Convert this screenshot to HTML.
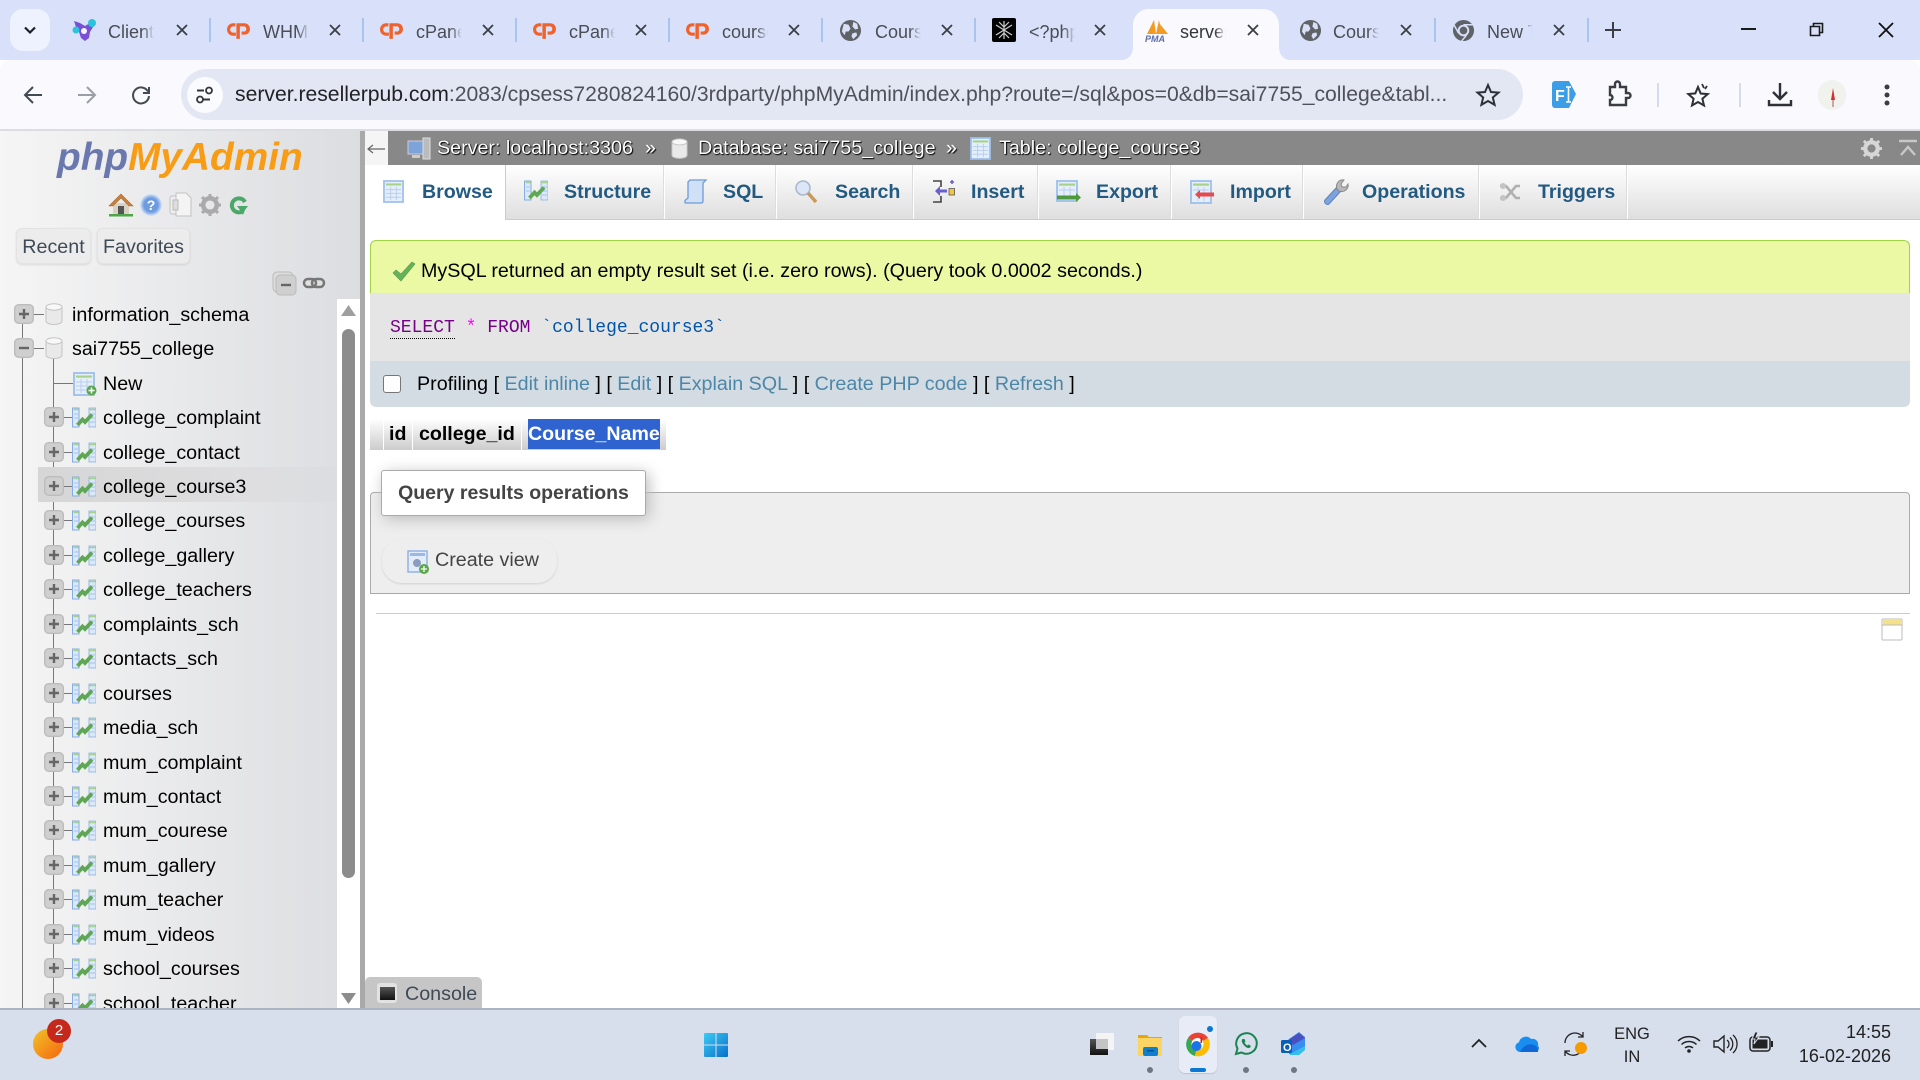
<!DOCTYPE html>
<html><head><meta charset="utf-8"><title>phpMyAdmin</title>
<style>
html,body{margin:0;padding:0;width:1920px;height:1080px;overflow:hidden;background:#fff}
body{font-family:"Liberation Sans",sans-serif;position:relative;font-size:19.7px;color:#000}
.abs{position:absolute;white-space:nowrap}
svg{position:absolute;overflow:visible}
.tabt{position:absolute;top:21px;font-size:18px;line-height:22px;color:#4a4d55;width:46px;overflow:hidden;white-space:nowrap;-webkit-mask-image:linear-gradient(to right,#000 75%,transparent 100%);mask-image:linear-gradient(to right,#000 75%,transparent 100%)}
.sep{position:absolute;top:18px;width:2px;height:24px;background:#a9c4ef}
.nt{position:absolute;top:179px;font-weight:bold;font-size:19.6px;color:#235a81;line-height:26px;white-space:nowrap}
.r{position:absolute;left:0;width:337px;height:34px}
.r span{position:absolute;left:103px;top:1px;line-height:34px;white-space:nowrap}
.r svg.p{left:44px;top:7px;width:20px;height:20px}
.r svg.h{left:64px;top:17px;width:10px;height:1px}
.r svg.i{left:72px;top:5px;width:24px;height:24px}
.lnk{color:#4d87a8}
.tbh{position:absolute;top:419px;height:31px;background:linear-gradient(#fff,#ccc)}
.vl{position:absolute;top:165px;width:1px;height:55px;background:#fff;box-shadow:-1px 0 0 #ddd}
</style></head><body>
<svg width="0" height="0" style="position:absolute">
<defs>
<symbol id="x" viewBox="0 0 14 14"><path d="M2 2L12 12M12 2L2 12" stroke="#3b3e45" stroke-width="1.800" fill="none"/></symbol>
<symbol id="cp" viewBox="0 0 24 20"><path d="M9 3H7C3.500 3 1 5.600 1 9s2.500 6 6 6h2.500V12H7c-1.600 0-3-1.300-3-3s1.400-3 3-3h2z" fill="#f1622a"/><path d="M10 18V3h7.500C21 3 23 5.500 23 8.500S21 14 17.500 14H15v-3h2.300c1.200 0 2.200-1.100 2.200-2.500S18.500 6 17.300 6H13.300v12z" fill="#f1622a"/></symbol>
<symbol id="gl" viewBox="0 0 24 24"><circle cx="12" cy="12" r="11" fill="#5f6368"/><path d="M5 5l5 1 2 4-2 3-3 0-1 4-3-4zM15 3l4 2 1 5-3 1-3-3zM14 15l4-1 1 3-4 4-2-3z" fill="#d8e1f8"/></symbol>
<symbol id="plus" viewBox="0 0 20 20"><rect x=".7" y=".7" width="18.600" height="18.600" rx="4" fill="#cfcfcf" stroke="#bcbcbc" stroke-width="1.400"/><path d="M5 10h10M10 5v10" stroke="#666" stroke-width="2.400"/></symbol>
<symbol id="minus" viewBox="0 0 20 20"><rect x=".7" y=".7" width="18.600" height="18.600" rx="4" fill="#cfcfcf" stroke="#bcbcbc" stroke-width="1.400"/><path d="M5 10h10" stroke="#666" stroke-width="2.400"/></symbol>
<symbol id="st" viewBox="0 0 24 24"><path d="M.5 3h6.500v19H.5z" fill="#dbe8f8" stroke="#86ade2"/><path d="M17 3h7v19h-7z" fill="#dbe8f8" stroke="#86ade2" stroke-width=".8"/><path d="M1.500 4.500h5" stroke="#a5d38a" stroke-width="1.500"/><path d="M17.500 4.500h6" stroke="#a5d38a" stroke-width="1.500"/><path d="M2 9h4M2 13h4M18 9h5M18 13h5M18 17h5" stroke="#a5c2ea"/><path d="M5.500 20L10.500 14.500l2.500 2.500 7-7.500" fill="none" stroke="#5fa655" stroke-width="3.800"/></symbol>
<symbol id="db" viewBox="0 0 18 22"><path d="M1 4v14c0 2 3.500 3.500 8 3.500s8-1.500 8-3.500V4z" fill="#e9e9e9" stroke="#c4c4c4"/><ellipse cx="9" cy="4" rx="8" ry="3.200" fill="#f8f8f8" stroke="#c4c4c4"/></symbol>
<symbol id="tb" viewBox="0 0 22 24"><rect x="1" y="1" width="20" height="22" fill="#e6eefa" stroke="#9cc0ec" stroke-width="1.800"/><rect x="3" y="3.500" width="16" height="2.200" fill="#a5d38a"/><path d="M3 10h16M3 14h16M3 18h16M8 7v14M14 7v14" stroke="#b7cfee"/></symbol>
</defs></svg>

<!-- TAB STRIP -->
<div class="abs" style="left:0;top:0;width:1920px;height:60px;background:#d8e1f9"></div>
<div class="abs" style="left:10px;top:9px;width:40px;height:42px;background:#edf2fe;border-radius:13px"></div>
<svg style="left:23px;top:26px" width="14" height="9"><path d="M2 1.500l5 5 5-5" stroke="#1d2024" stroke-width="2.200" fill="none"/></svg>

<svg style="left:72px;top:18px" width="25" height="24" viewBox="0 0 25 24"><path d="M2 3l6 2 5 3 5-3 5-2-2 6-3 5-1 6-4 3-4-3-2-6-3-5z" fill="#7a4fd6"/><circle cx="20" cy="5" r="4" fill="#2cc4dc"/><circle cx="4" cy="12" r="3.500" fill="#2cc4dc"/><circle cx="12" cy="13" r="3" fill="#f5f3fb"/></svg>
<div class="tabt" style="left:108px">Client</div>
<svg style="left:175px;top:23px" width="14" height="14"><use href="#x"/></svg>
<div class="sep" style="left:209px"></div>
<svg style="left:226px;top:20px" width="25" height="21"><use href="#cp"/></svg>
<div class="tabt" style="left:263px">WHM</div>
<svg style="left:328px;top:23px" width="14" height="14"><use href="#x"/></svg>
<div class="sep" style="left:362px"></div>
<svg style="left:379px;top:20px" width="25" height="21"><use href="#cp"/></svg>
<div class="tabt" style="left:416px">cPanel</div>
<svg style="left:481px;top:23px" width="14" height="14"><use href="#x"/></svg>
<div class="sep" style="left:515px"></div>
<svg style="left:532px;top:20px" width="25" height="21"><use href="#cp"/></svg>
<div class="tabt" style="left:569px">cPanel</div>
<svg style="left:634px;top:23px" width="14" height="14"><use href="#x"/></svg>
<div class="sep" style="left:668px"></div>
<svg style="left:685px;top:20px" width="25" height="21"><use href="#cp"/></svg>
<div class="tabt" style="left:722px">courses</div>
<svg style="left:787px;top:23px" width="14" height="14"><use href="#x"/></svg>
<div class="sep" style="left:821px"></div>
<svg style="left:839px;top:19px" width="23" height="23"><use href="#gl"/></svg>
<div class="tabt" style="left:875px">Course</div>
<svg style="left:940px;top:23px" width="14" height="14"><use href="#x"/></svg>
<div class="sep" style="left:974px"></div>
<div class="abs" style="left:992px;top:18px;width:24px;height:24px;background:#000;border-radius:2px"></div>
<svg style="left:992px;top:18px" width="24" height="24"><path d="M12 3v18M4 7l16 10M20 7L4 17M7 4l5 5 5-5M7 20l5-5 5 5" stroke="#ccc" stroke-width="1.200" fill="none"/></svg>
<div class="tabt" style="left:1029px">&lt;?php</div>
<svg style="left:1093px;top:23px" width="14" height="14"><use href="#x"/></svg>

<!-- Active tab -->
<svg style="left:1120px;top:9px" width="172" height="52" viewBox="0 0 172 52"><path d="M0 51c8 0 12-4 13-12V16C13 7 20 0 29 0h114c9 0 16 7 16 16v23c1 8 5 12 13 12z" fill="#f9f9fe"/></svg>
<svg style="left:1145px;top:18px" width="25" height="25" viewBox="0 0 25 25"><path d="M2 16L9 2l2 14zM11 16L14 2l3 14zM17 16L15 6l8 10z" fill="#f29b22"/><text x="0" y="24" font-family="Liberation Sans" font-size="9" font-weight="bold" font-style="italic" fill="#5a6ea8">PMA</text></svg>
<div class="tabt" style="left:1180px;color:#33363c">server</div>
<svg style="left:1246px;top:23px" width="14" height="14"><use href="#x"/></svg>

<svg style="left:1299px;top:19px" width="23" height="23"><use href="#gl"/></svg>
<div class="tabt" style="left:1333px">Course</div>
<svg style="left:1399px;top:23px" width="14" height="14"><use href="#x"/></svg>
<div class="sep" style="left:1434px"></div>
<svg style="left:1452px;top:19px" width="23" height="23" viewBox="0 0 24 24"><circle cx="12" cy="12" r="11" fill="#5f6368"/><circle cx="12" cy="12" r="6" fill="#d8e1f9"/><circle cx="12" cy="12" r="4" fill="#5f6368"/><path d="M12 6h10M7 15L2 6M15 17l-5 6" stroke="#d8e1f9" stroke-width="1.500"/></svg>
<div class="tabt" style="left:1487px">New Tab</div>
<svg style="left:1552px;top:23px" width="14" height="14"><use href="#x"/></svg>
<div class="sep" style="left:1587px"></div>
<svg style="left:1605px;top:22px" width="16" height="16"><path d="M8 0v16M0 8h16" stroke="#3b3e45" stroke-width="2"/></svg>
<svg style="left:1741px;top:28px" width="15" height="3"><rect width="15" height="2" fill="#1a1a1a"/></svg>
<svg style="left:1809px;top:22px" width="15" height="15"><path d="M1.500 4.500h9v9h-9zM4.500 4.500v-3h9v9h-3" fill="none" stroke="#1a1a1a" stroke-width="1.600"/></svg>
<svg style="left:1878px;top:22px" width="16" height="16"><path d="M1 1l14 14M15 1L1 15" stroke="#111" stroke-width="1.800"/></svg>

<!-- TOOLBAR -->
<div class="abs" style="left:0;top:60px;width:1920px;height:69px;background:#f9f9fe;border-radius:10px 10px 0 0"></div>
<div class="abs" style="left:0;top:129px;width:1920px;height:2px;background:#dcdde2"></div>
<svg style="left:23px;top:85px" width="20" height="20"><path d="M19 10H2M10 2l-8 8 8 8" fill="none" stroke="#444a52" stroke-width="2"/></svg>
<svg style="left:77px;top:85px" width="20" height="20"><path d="M1 10h17M10 2l8 8-8 8" fill="none" stroke="#9a9ea6" stroke-width="2"/></svg>
<svg style="left:131px;top:85px" width="20" height="20"><path d="M17 6.500A8 8 0 1 0 18 11M18 2v6h-6" fill="none" stroke="#444a52" stroke-width="2"/></svg>
<div class="abs" style="left:181px;top:69px;width:1342px;height:51px;background:#e3e7f3;border-radius:26px"></div>
<div class="abs" style="left:187px;top:77px;width:36px;height:36px;background:#fafbff;border-radius:18px"></div>
<svg style="left:196px;top:86px" width="18" height="18"><path d="M1 4.500h7M14 13.500H7" stroke="#33363c" stroke-width="2"/><circle cx="13" cy="4.500" r="3" fill="none" stroke="#33363c" stroke-width="1.800"/><circle cx="4" cy="13.500" r="3" fill="none" stroke="#33363c" stroke-width="1.800"/></svg>
<div class="abs" style="left:235px;top:82px;font-size:21.15px;line-height:25px;color:#4e5159;width:1220px;overflow:hidden"><span style="color:#1f2125">server.resellerpub.com</span>:2083/cpsess7280824160/3rdparty/phpMyAdmin/index.php?route=/sql&amp;pos=0&amp;db=sai7755_college&amp;tabl...</div>
<svg style="left:1476px;top:83px" width="24" height="24" viewBox="0 0 24 24"><path d="M12 2l3 7 7.500.6-5.700 4.900 1.800 7.300L12 18l-6.600 3.800 1.800-7.300L1.500 9.600 9 9z" fill="none" stroke="#2e3137" stroke-width="2"/></svg>
<svg style="left:1551px;top:80px" width="26" height="29" viewBox="0 0 26 29"><path d="M4 1h14l7 13-7 14H4a3 3 0 0 1-3-3V4a3 3 0 0 1 3-3z" fill="#3c9ee6"/><text x="4" y="21" font-family="Liberation Sans" font-size="16" font-weight="bold" fill="#fff">F</text><path d="M15 7h5M15 22h5M17.500 7v15" stroke="#fff" stroke-width="1.600"/></svg>
<svg style="left:1607px;top:81px" width="24" height="26" viewBox="0 0 24 26"><path d="M3 6h5V3a2.500 2.500 0 0 1 5 0v3h6v6h2a2.500 2.500 0 0 1 0 5h-2v7H3v-5a2.500 2.500 0 0 0 0-5z" fill="none" stroke="#3a3d44" stroke-width="2.400"/></svg>
<div class="abs" style="left:1657px;top:83px;width:2px;height:24px;background:#d4dcee"></div>
<svg style="left:1686px;top:83px" width="26" height="24" viewBox="0 0 26 24"><path d="M12 4l2.700 6.500 7 .6-5.300 4.600 1.600 6.800L12 19l-6 3.500 1.600-6.800L2.300 11l7-.6z" fill="none" stroke="#2e3137" stroke-width="2"/><path d="M16 1l2 4M21 3l-2 3" stroke="#2e3137" stroke-width="1.800"/></svg>
<div class="abs" style="left:1739px;top:83px;width:2px;height:24px;background:#d4dcee"></div>
<svg style="left:1768px;top:82px" width="24" height="25" viewBox="0 0 24 25"><path d="M12 1v15M5 10l7 7 7-7" fill="none" stroke="#2e3137" stroke-width="2.400"/><path d="M1 18v5h22v-5" fill="none" stroke="#2e3137" stroke-width="2.400"/></svg>
<div class="abs" style="left:1818px;top:80px;width:28px;height:30px;background:radial-gradient(circle,#f2f3e8,#eef2f2);border-radius:14px"></div>
<svg style="left:1830px;top:88px" width="6" height="20"><path d="M3 0L5 12H1z" fill="#cf2f3a"/><path d="M3 12v7" stroke="#a55" stroke-width="1"/></svg>
<svg style="left:1884px;top:84px" width="6" height="22"><circle cx="3" cy="3" r="2.500" fill="#3a3d44"/><circle cx="3" cy="11" r="2.500" fill="#3a3d44"/><circle cx="3" cy="19" r="2.500" fill="#3a3d44"/></svg>

<!-- SIDEBAR -->
<div class="abs" style="left:0;top:131px;width:360px;height:877px;background:linear-gradient(to right,#f5f5f5,#dcdde0)"></div>
<div class="abs" style="left:360px;top:131px;width:5px;height:877px;background:#a9a9a9"></div>
<div class="abs" style="left:57px;top:136px;font-size:38.800px;line-height:44px;font-weight:bold;font-style:italic;color:#6a78ae">php<span style="color:#f79c14">MyAdmin</span></div>

<svg style="left:108px;top:192px" width="26" height="25" viewBox="0 0 26 25"><path d="M5 11h16v11H5z" fill="#d9d2c2"/><path d="M13 2L1 14h4L13 6l8 8h4z" fill="#c8803e" stroke="#a86a30" stroke-width=".6"/><rect x="10" y="14" width="6" height="8" fill="#555"/><path d="M1 22h24v2.500H1z" fill="#4ea648"/></svg>
<div class="abs" style="left:140px;top:194px;width:22px;height:22px;border-radius:11px;background:radial-gradient(circle,#6d9be0 45%,#d6e4f7 70%,#7da4dc 100%);text-align:center;color:#fff;font-size:14px;font-weight:bold;line-height:22px">?</div>
<svg style="left:169px;top:192px" width="23" height="25" viewBox="0 0 23 25"><rect x="1" y="4" width="12" height="18" rx="2" fill="#eee" stroke="#c2c2c2"/><path d="M7 1h10l5 5v18H7z" fill="#f4f4f4" stroke="#c2c2c2"/><rect x="4" y="8" width="5" height="10" fill="#ddd" stroke="#bbb"/></svg>
<svg style="left:198px;top:193px" width="24" height="24" viewBox="0 0 24 24"><circle cx="12" cy="12" r="6.800" fill="none" stroke="#aaa" stroke-width="4.500"/><path d="M12 1v5M12 18v5M1 12h5M18 12h5M4 4l4 4M16 16l4 4M20 4l-4 4M8 16l-4 4" stroke="#aaa" stroke-width="3"/></svg>
<svg style="left:229px;top:194px" width="20" height="24" viewBox="0 0 20 24"><path d="M16 8A7 7 0 1 0 14 17" fill="none" stroke="#4aa868" stroke-width="4"/><path d="M8 12h11l-3 4 -2 5-3-5z" fill="#4aa868"/></svg>

<div class="abs" style="left:16px;top:228px;width:73px;height:34px;background:#ececec;border:1px solid #e3e3e3;border-radius:6px;text-align:center;line-height:36px;color:#3f4a57;box-shadow:0 1px 2px rgba(0,0,0,.1)">Recent</div>
<div class="abs" style="left:97px;top:228px;width:91px;height:34px;background:#ececec;border:1px solid #e3e3e3;border-radius:6px;text-align:center;line-height:36px;color:#3f4a57;box-shadow:0 1px 2px rgba(0,0,0,.1)">Favorites</div>

<svg style="left:272px;top:271px" width="24" height="24" viewBox="0 0 24 24"><rect x="1" y="1" width="20" height="20" rx="4" fill="#ddd" stroke="#bbb"/><rect x="4" y="4" width="20" height="20" rx="4" fill="#cfcfcf" stroke="#bbb"/><path d="M9 14h10" stroke="#666" stroke-width="2.400"/></svg>
<svg style="left:303px;top:276px" width="22" height="14" viewBox="0 0 22 14"><rect x="1" y="3" width="12" height="8" rx="4" fill="none" stroke="#777" stroke-width="2.500"/><rect x="9" y="3" width="12" height="8" rx="4" fill="none" stroke="#777" stroke-width="2.500"/></svg>

<!-- scrollbar -->
<div class="abs" style="left:337px;top:299px;width:23px;height:709px;background:#fff"></div>
<svg style="left:341px;top:305px" width="15" height="12"><path d="M7.500 0L15 11H0z" fill="#9f9f9f"/></svg>
<div class="abs" style="left:342px;top:329px;width:13px;height:549px;background:#8c8c8c;border-radius:7px"></div>
<svg style="left:341px;top:993px" width="15" height="12"><path d="M7.500 11L15 0H0z" fill="#8c8c8c"/></svg>

<!-- tree -->
<div class="abs" style="left:22px;top:324px;width:1px;height:684px;background:#777"></div>
<div class="abs" style="left:53px;top:348px;width:1px;height:660px;background:#777"></div>
<div class="abs" style="left:38px;top:467px;width:299px;height:35px;background:linear-gradient(to right,#d6d6d6,#dedee0 70%,#dcdde0)"></div>

<svg style="left:14px;top:304px" width="20" height="20"><use href="#plus"/></svg>
<div class="abs" style="left:34px;top:314px;width:10px;height:1px;background:#777"></div>
<svg style="left:45px;top:303px" width="18" height="22"><use href="#db"/></svg>
<div class="abs" style="left:72px;top:298px;line-height:34px">information_schema</div>
<svg style="left:14px;top:338px" width="20" height="20"><use href="#minus"/></svg>
<div class="abs" style="left:34px;top:348px;width:10px;height:1px;background:#777"></div>
<svg style="left:45px;top:337px" width="18" height="22"><use href="#db"/></svg>
<div class="abs" style="left:72px;top:332px;line-height:34px">sai7755_college</div>
<div class="abs" style="left:53px;top:383px;width:20px;height:1px;background:#777"></div>
<svg style="left:73px;top:372px" width="22" height="24"><use href="#tb"/></svg>
<svg style="left:86px;top:385px" width="11" height="11"><circle cx="5.500" cy="5.500" r="5" fill="#5aa84a"/><path d="M2.500 5.500h6M5.500 2.500v6" stroke="#fff" stroke-width="1.500"/></svg>
<div class="abs" style="left:103px;top:367px;line-height:34px">New</div>

<div class="r" style="top:400px"><svg class="p"><use href="#plus"/></svg><svg class="h"><rect width="10" height="1" fill="#777"/></svg><svg class="i"><use href="#st"/></svg><span>college_complaint</span></div>
<div class="r" style="top:434.500px"><svg class="p"><use href="#plus"/></svg><svg class="h"><rect width="10" height="1" fill="#777"/></svg><svg class="i"><use href="#st"/></svg><span>college_contact</span></div>
<div class="r" style="top:469px"><svg class="p"><use href="#plus"/></svg><svg class="h"><rect width="10" height="1" fill="#777"/></svg><svg class="i"><use href="#st"/></svg><span>college_course3</span></div>
<div class="r" style="top:503.400px"><svg class="p"><use href="#plus"/></svg><svg class="h"><rect width="10" height="1" fill="#777"/></svg><svg class="i"><use href="#st"/></svg><span>college_courses</span></div>
<div class="r" style="top:537.800px"><svg class="p"><use href="#plus"/></svg><svg class="h"><rect width="10" height="1" fill="#777"/></svg><svg class="i"><use href="#st"/></svg><span>college_gallery</span></div>
<div class="r" style="top:572.200px"><svg class="p"><use href="#plus"/></svg><svg class="h"><rect width="10" height="1" fill="#777"/></svg><svg class="i"><use href="#st"/></svg><span>college_teachers</span></div>
<div class="r" style="top:606.700px"><svg class="p"><use href="#plus"/></svg><svg class="h"><rect width="10" height="1" fill="#777"/></svg><svg class="i"><use href="#st"/></svg><span>complaints_sch</span></div>
<div class="r" style="top:641.100px"><svg class="p"><use href="#plus"/></svg><svg class="h"><rect width="10" height="1" fill="#777"/></svg><svg class="i"><use href="#st"/></svg><span>contacts_sch</span></div>
<div class="r" style="top:675.600px"><svg class="p"><use href="#plus"/></svg><svg class="h"><rect width="10" height="1" fill="#777"/></svg><svg class="i"><use href="#st"/></svg><span>courses</span></div>
<div class="r" style="top:710px"><svg class="p"><use href="#plus"/></svg><svg class="h"><rect width="10" height="1" fill="#777"/></svg><svg class="i"><use href="#st"/></svg><span>media_sch</span></div>
<div class="r" style="top:744.500px"><svg class="p"><use href="#plus"/></svg><svg class="h"><rect width="10" height="1" fill="#777"/></svg><svg class="i"><use href="#st"/></svg><span>mum_complaint</span></div>
<div class="r" style="top:778.900px"><svg class="p"><use href="#plus"/></svg><svg class="h"><rect width="10" height="1" fill="#777"/></svg><svg class="i"><use href="#st"/></svg><span>mum_contact</span></div>
<div class="r" style="top:813.400px"><svg class="p"><use href="#plus"/></svg><svg class="h"><rect width="10" height="1" fill="#777"/></svg><svg class="i"><use href="#st"/></svg><span>mum_courese</span></div>
<div class="r" style="top:847.800px"><svg class="p"><use href="#plus"/></svg><svg class="h"><rect width="10" height="1" fill="#777"/></svg><svg class="i"><use href="#st"/></svg><span>mum_gallery</span></div>
<div class="r" style="top:882.300px"><svg class="p"><use href="#plus"/></svg><svg class="h"><rect width="10" height="1" fill="#777"/></svg><svg class="i"><use href="#st"/></svg><span>mum_teacher</span></div>
<div class="r" style="top:916.700px"><svg class="p"><use href="#plus"/></svg><svg class="h"><rect width="10" height="1" fill="#777"/></svg><svg class="i"><use href="#st"/></svg><span>mum_videos</span></div>
<div class="r" style="top:951.200px"><svg class="p"><use href="#plus"/></svg><svg class="h"><rect width="10" height="1" fill="#777"/></svg><svg class="i"><use href="#st"/></svg><span>school_courses</span></div>
<div class="r" style="top:985.600px"><svg class="p"><use href="#plus"/></svg><svg class="h"><rect width="10" height="1" fill="#777"/></svg><svg class="i"><use href="#st"/></svg><span>school_teacher</span></div>

<!-- MAIN HEADER -->
<div class="abs" style="left:365px;top:131px;width:1555px;height:34px;background:#888"></div>
<div class="abs" style="left:365px;top:131px;width:23px;height:34px;background:#f5f5f5"></div>
<svg style="left:367px;top:144px" width="18" height="10"><path d="M18 5H1M6 1L1 5l5 4" fill="none" stroke="#666" stroke-width="1.200"/></svg>
<svg style="left:407px;top:136px" width="24" height="25" viewBox="0 0 24 25"><rect x="1" y="5" width="15" height="13" fill="#7da4d8" stroke="#ccd"/><rect x="16" y="2" width="7" height="21" fill="#bbb" stroke="#ddd"/><rect x="5" y="19" width="8" height="3" fill="#ccc"/></svg>
<div class="abs" style="left:437px;top:135px;line-height:26px;color:#fff;text-shadow:1px 1px 1px #000,0 0 1px #000">Server: localhost:3306</div>
<div class="abs" style="left:645px;top:135px;line-height:26px;color:#fff;text-shadow:1px 1px 1px #000">»</div>
<svg style="left:671px;top:138px" width="17" height="21"><use href="#db"/></svg>
<div class="abs" style="left:698px;top:135px;line-height:26px;color:#fff;text-shadow:1px 1px 1px #000,0 0 1px #000">Database: sai7755_college</div>
<div class="abs" style="left:946px;top:135px;line-height:26px;color:#fff;text-shadow:1px 1px 1px #000">»</div>
<svg style="left:970px;top:137px" width="21" height="23"><use href="#tb"/></svg>
<div class="abs" style="left:999px;top:135px;line-height:26px;color:#fff;text-shadow:1px 1px 1px #000,0 0 1px #000">Table: college_course3</div>
<svg style="left:1860px;top:137px" width="23" height="23" viewBox="0 0 24 24"><circle cx="12" cy="12" r="6.500" fill="none" stroke="#d6d6d6" stroke-width="4.500"/><path d="M12 1v5M12 18v5M1 12h5M18 12h5M4 4l4 4M16 16l4 4M20 4l-4 4M8 16l-4 4" stroke="#d6d6d6" stroke-width="3"/></svg>
<svg style="left:1899px;top:140px" width="18" height="17"><path d="M0 1h18M2 15l7-8 7 8" fill="none" stroke="#c8c8c8" stroke-width="2.400"/></svg>

<!-- NAV TABS -->
<div class="abs" style="left:365px;top:165px;width:1555px;height:55px;background:linear-gradient(#fff,#dedede)"></div>
<div class="abs" style="left:365px;top:165px;width:141px;height:55px;background:#fff;border-right:1px solid #ccc;box-sizing:border-box"></div>
<div class="vl" style="left:664px"></div>
<div class="vl" style="left:776px"></div>
<div class="vl" style="left:913px"></div>
<div class="vl" style="left:1038px"></div>
<div class="vl" style="left:1171px"></div>
<div class="vl" style="left:1303px"></div>
<div class="vl" style="left:1479px"></div>
<div class="vl" style="left:1627px"></div>
<svg style="left:383px;top:180px" width="21" height="23"><use href="#tb"/></svg>
<div class="nt" style="left:422px">Browse</div>
<svg style="left:524px;top:178px" width="24" height="24"><use href="#st"/></svg>
<div class="nt" style="left:564px">Structure</div>
<svg style="left:684px;top:179px" width="23" height="25" viewBox="0 0 23 25"><path d="M6 1h16l-3 3v18c0 1.500-1 2-2 2H2c-1.500 0-1.500-2-.5-3L4 19V3z" fill="#cfe0f7" stroke="#6f9bd8" stroke-width="1.300"/></svg>
<div class="nt" style="left:723px">SQL</div>
<svg style="left:795px;top:180px" width="22" height="24" viewBox="0 0 22 24"><circle cx="8" cy="8" r="7" fill="#dbe7f7" stroke="#a8b8cc" stroke-width="1.500"/><path d="M13 13l8 9" stroke="#c99a5c" stroke-width="3.500"/></svg>
<div class="nt" style="left:835px">Search</div>
<svg style="left:933px;top:179px" width="22" height="26" viewBox="0 0 22 26"><path d="M0 2h8v5M0 23h8v-5M8 7v1M8 17v1" fill="none" stroke="#444" stroke-width="1.600"/><path d="M14 10.500H7V7L2 12l5 5v-3.500h7z" fill="#6a5fd0"/><rect x="16" y="9.500" width="5.500" height="6.500" fill="#f3c63d" stroke="#555" stroke-width=".8"/><path d="M19 1v4M17 3h4" stroke="#6a5fd0" stroke-width="1.500"/></svg>
<div class="nt" style="left:971px">Insert</div>
<svg style="left:1056px;top:180px" width="25" height="24" viewBox="0 0 25 24"><rect x="1" y="1" width="20" height="20" fill="#e6eefa" stroke="#9cc0ec" stroke-width="1.800"/><rect x="3" y="3.500" width="16" height="2.200" fill="#a5d38a"/><path d="M3 10h16M8 7v9M14 7v9" stroke="#b7cfee"/><path d="M1 15.500h19V13l5 4.500-5 4.500v-2.500H1z" fill="#4f9a3c"/></svg>
<div class="nt" style="left:1096px">Export</div>
<svg style="left:1190px;top:180px" width="24" height="24" viewBox="0 0 24 24"><rect x="1" y="1" width="20" height="22" fill="#e6eefa" stroke="#9cc0ec" stroke-width="1.800"/><rect x="3" y="3.500" width="16" height="2.200" fill="#a5d38a"/><path d="M3 10h16M8 7v14M14 7v14" stroke="#b7cfee"/><path d="M24 12.500H10V10l-5 4.500 5 4.500v-2.500h14z" fill="#e74a4a"/></svg>
<div class="nt" style="left:1230px">Import</div>
<svg style="left:1323px;top:178px" width="26" height="28" viewBox="0 0 26 28"><path d="M2 22L14 9l4 4L6 26c-2 2-6-2-4-4z" fill="#7da3dd" stroke="#5e83bc"/><path d="M14 11c-2-5 2-10 7-9l-3 4 1 3 4 0 2-3c1 5-4 9-9 7z" fill="#b8b8b8" stroke="#888"/></svg>
<div class="nt" style="left:1362px">Operations</div>
<svg style="left:1499px;top:181px" width="24" height="22" viewBox="0 0 24 22"><path d="M1 5h6l10 12h4M1 17h6L17 5h4" fill="none" stroke="#b0b0b0" stroke-width="2.600"/><circle cx="4" cy="5" r="3" fill="#c4c4c4"/><circle cx="4" cy="17" r="3" fill="#c4c4c4"/></svg>
<div class="nt" style="left:1538px">Triggers</div>
<div class="abs" style="left:506px;top:219px;width:1414px;height:1px;background:#ccc"></div>

<!-- SUCCESS -->
<div class="abs" style="left:370px;top:240px;width:1540px;height:53px;background:#ebf8a4;border:1px solid #a2d246;border-bottom:none;border-radius:6px 6px 0 0;box-sizing:border-box"></div>
<svg style="left:393px;top:262px" width="22" height="19" viewBox="0 0 22 19"><path d="M0 11l3-3 5 4L19 0l3 2L8 19z" fill="#66b258" stroke="#5a9c50" stroke-width=".6"/></svg>
<div class="abs" style="left:421px;top:257px;line-height:28px">MySQL returned an empty result set (i.e. zero rows). (Query took 0.0002 seconds.)</div>

<!-- SQL -->
<div class="abs" style="left:370px;top:293px;width:1540px;height:68px;background:#e5e5e5"></div>
<div class="abs" style="left:390px;top:315px;font-family:'Liberation Mono',monospace;font-size:18px;line-height:26px"><span style="color:#770088;border-bottom:1px dotted #000">SELECT</span> <span style="color:#ff00ff">*</span> <span style="color:#770088">FROM</span> <span style="color:#0055aa">`college_course3`</span></div>

<!-- Links bar -->
<div class="abs" style="left:370px;top:361px;width:1540px;height:46px;background:#d3dce3;border-radius:0 0 6px 6px"></div>
<div class="abs" style="left:383px;top:375px;width:16px;height:16px;background:#fff;border:1.500px solid #767676;border-radius:3px"></div>
<div class="abs" style="left:417px;top:371px;line-height:26px">Profiling [ <span class="lnk">Edit inline</span> ] [ <span class="lnk">Edit</span> ] [ <span class="lnk">Explain SQL</span> ] [ <span class="lnk">Create PHP code</span> ] [ <span class="lnk">Refresh</span> ]</div>

<!-- results table -->
<div class="tbh" style="left:370px;width:13px"></div>
<div class="tbh" style="left:384px;width:28px"></div>
<div class="tbh" style="left:413px;width:108px"></div>
<div class="tbh" style="left:522px;width:144px"></div>
<div class="abs" style="left:389px;top:419px;line-height:30px;font-weight:bold;font-size:19.6px">id</div>
<div class="abs" style="left:419px;top:419px;line-height:30px;font-weight:bold;font-size:19.6px">college_id</div>
<div class="abs" style="left:528px;top:419px;width:132px;height:30px;line-height:30px;font-weight:bold;font-size:19.6px;background:#2f63cf;color:#fff;overflow:hidden">Course_Name</div>

<!-- Fieldset -->
<div class="abs" style="left:370px;top:492px;width:1540px;height:102px;background:#eee;border:1px solid #aaa;border-radius:4px 4px 0 0;box-sizing:border-box"></div>
<div class="abs" style="left:381px;top:470px;width:265px;height:46px;background:#fff;border:1px solid #aaa;border-radius:3px;box-sizing:border-box;box-shadow:3px 3px 15px #bbb;font-weight:bold;font-size:19.5px;color:#444;line-height:44px;text-align:center">Query results operations</div>
<div class="abs" style="left:382px;top:539px;width:175px;height:44px;border-radius:20px;background:#eee;box-shadow:0 1px 2px rgba(0,0,0,.12)"></div>
<svg style="left:407px;top:550px" width="22" height="24" viewBox="0 0 22 24"><rect x="1" y="1" width="19" height="21" fill="#e3ecf9" stroke="#8caee0" stroke-width="1.400"/><rect x="3" y="3" width="15" height="3" fill="#9bb9e6"/><circle cx="10" cy="13" r="4" fill="#8a9cc0"/><circle cx="17" cy="19" r="5" fill="#5aa84a"/><path d="M14 19h6M17 16v6" stroke="#fff" stroke-width="1.300"/></svg>
<div class="abs" style="left:435px;top:547px;line-height:26px;color:#444">Create view</div>
<div class="abs" style="left:376px;top:613px;width:1534px;height:1px;background:#ccc"></div>
<svg style="left:1881px;top:618px" width="22" height="23" viewBox="0 0 22 23"><rect x="1" y="1" width="20" height="21" rx="1" fill="#fff" stroke="#bbb"/><rect x="2" y="2" width="18" height="5" fill="#f3e28a"/><path d="M1 7h20" stroke="#bbb"/></svg>

<!-- Console -->
<div class="abs" style="left:365px;top:977px;width:117px;height:31px;background:#c6c6c6;border-radius:5px 5px 0 0"></div>
<div class="abs" style="left:377px;top:983px;width:20px;height:20px;background:#e2e2e2;border-radius:3px"></div>
<div class="abs" style="left:380px;top:987px;width:15px;height:13px;background:linear-gradient(#555,#111)"></div>
<div class="abs" style="left:405px;top:981px;line-height:26px;color:#3f4a57">Console</div>

<!-- TASKBAR -->
<div class="abs" style="left:0;top:1008px;width:1920px;height:72px;background:#d7deec;border-top:2px solid #adb3c0;box-sizing:border-box"></div>
<div class="abs" style="left:33px;top:1029px;width:30px;height:30px;border-radius:15px;background:linear-gradient(135deg,#f2c327,#f4650f)"></div>
<div class="abs" style="left:47px;top:1019px;width:24px;height:24px;border-radius:12px;background:#c4291c;color:#fff;font-size:15px;line-height:24px;text-align:center">2</div>

<svg style="left:704px;top:1033px" width="24" height="24" viewBox="0 0 24 24"><defs><linearGradient id="w" x1="0" y1="0" x2="1" y2="1"><stop offset="0" stop-color="#3ccbf4"/><stop offset="1" stop-color="#0a6fc9"/></linearGradient></defs><path d="M1 0h10.500v11.500H0V1a1 1 0 0 1 1-1zM12.500 0H23a1 1 0 0 1 1 1v10.500H12.500zM0 12.500h11.500V24H1a1 1 0 0 1-1-1zM12.500 12.500H24V23a1 1 0 0 1-1 1H12.500z" fill="url(#w)"/></svg>
<div class="abs" style="left:1096px;top:1033px;width:18px;height:17px;background:#f4f4f4"></div>
<div class="abs" style="left:1090px;top:1039px;width:18px;height:16px;background:linear-gradient(#555,#111)"></div>
<div class="abs" style="left:1096px;top:1039px;width:12px;height:10px;background:#c4c4c4"></div>
<svg style="left:1138px;top:1033px" width="24" height="23" viewBox="0 0 24 23"><path d="M0 2h9l2 2h13v19H0z" fill="#e3a80e"/><rect y="5" width="24" height="18" fill="#fcd463"/><rect x="5" y="14" width="15" height="9" rx="2" fill="#0d7fd1"/><rect x="9" y="17" width="7" height="1.500" fill="#054f89"/></svg>
<div class="abs" style="left:1179px;top:1016px;width:38px;height:57px;background:#e7ecf6;border-radius:6px;box-shadow:0 1px 1px rgba(0,0,0,.12)"></div>
<svg style="left:1185px;top:1031px" width="25" height="26" viewBox="0 0 25 26"><path d="M12.500 13L3 7A12 12 0 0 1 23 7z" fill="#ea4335"/><path d="M12.500 13L3 7a12 12 0 0 0 7 18z" fill="#34a853"/><path d="M12.500 13L23 7a12 12 0 0 1-13 18z" fill="#fbbc04"/><circle cx="12.500" cy="13" r="6" fill="#fff"/><circle cx="11.500" cy="15" r="5" fill="#1a73e8"/><rect x="15.500" y="6" width="1.500" height="6" fill="#c4291c"/></svg>
<div class="abs" style="left:1207px;top:1026px;width:6px;height:6px;border-radius:3px;background:#0a78d4"></div>
<div class="abs" style="left:1190px;top:1068px;width:16px;height:4px;border-radius:2px;background:#0a78d4"></div>
<svg style="left:1234px;top:1032px" width="24" height="24" viewBox="0 0 24 24"><path d="M2 22l1.500-5.500A10.300 10.300 0 1 1 7.500 20.500z" fill="none" stroke="#1a8450" stroke-width="2"/><path d="M8.500 7c-1 1-1 3 .5 5s4 4.500 6 4c1.500-.4 2-1.500 1.500-2.500l-2-1-1 1c-1.300-.5-2.500-1.800-3-3l1-1-1-2.500z" fill="#1a8450"/></svg>
<svg style="left:1281px;top:1032px" width="25" height="24" viewBox="0 0 25 24"><path d="M8 7L18 0l6 5v11l-8 6H8z" fill="#3a8df0"/><path d="M7 8L18 1l6 5-12 7z" fill="#4b4fc0"/><path d="M9 22l15-8v4l-6 5H9z" fill="#30c0ee"/><rect x="0" y="8" width="11" height="13" rx="1.500" fill="#0a5fb5"/><text x="2" y="19" font-family="Liberation Sans" font-size="11" font-weight="bold" fill="#fff">O</text></svg>
<div class="abs" style="left:1147px;top:1067px;width:6px;height:6px;border-radius:3px;background:#6f7683"></div>
<div class="abs" style="left:1243px;top:1067px;width:6px;height:6px;border-radius:3px;background:#6f7683"></div>
<div class="abs" style="left:1291px;top:1067px;width:6px;height:6px;border-radius:3px;background:#6f7683"></div>

<svg style="left:1471px;top:1038px" width="16" height="10"><path d="M1 9l7-7 7 7" fill="none" stroke="#222" stroke-width="1.800"/></svg>
<svg style="left:1515px;top:1035px" width="25" height="18" viewBox="0 0 25 18"><path d="M5 17a5 5 0 0 1-1-9.800A7 7 0 0 1 16 4a5.500 5.500 0 0 1 7 6.500A4 4 0 0 1 21 17z" fill="#1a8ef0"/><path d="M5 17c3-6 8-9 14-7 3 1 4 3 4 7z" fill="#0f67d8"/></svg>
<svg style="left:1562px;top:1031px" width="26" height="26" viewBox="0 0 26 26"><path d="M3 12A10 10 0 0 1 21 6M21 1v5h-5M21 16A10 10 0 0 1 3 20M3 25v-5h5" fill="none" stroke="#222" stroke-width="1.300"/><circle cx="19" cy="17" r="6" fill="#f59b00"/></svg>
<div class="abs" style="left:1592px;top:1023px;width:80px;text-align:center;font-size:16.500px;line-height:23px;color:#222">ENG<br>IN</div>
<svg style="left:1677px;top:1035px" width="24" height="18" viewBox="0 0 24 18"><path d="M1 6a16 16 0 0 1 22 0M4.500 9.500a11 11 0 0 1 15 0M8 13a6 6 0 0 1 8 0" fill="none" stroke="#222" stroke-width="1.500"/><circle cx="12" cy="16" r="1.800" fill="#222"/></svg>
<svg style="left:1713px;top:1034px" width="25" height="20" viewBox="0 0 25 20"><path d="M1 7v6h4l6 5V2L5 7z" fill="none" stroke="#222" stroke-width="1.400"/><path d="M14 6a5 5 0 0 1 0 8M17 3.500a9 9 0 0 1 0 13M20 1a12 12 0 0 1 0 18" fill="none" stroke="#222" stroke-width="1.300"/></svg>
<svg style="left:1749px;top:1032px" width="25" height="20" viewBox="0 0 25 20"><rect x="1" y="5" width="20" height="14" rx="3" fill="none" stroke="#222" stroke-width="1.500"/><rect x="3.500" y="7.500" width="15" height="9" fill="#222"/><rect x="22" y="9" width="2" height="6" fill="#222"/><path d="M6 0L3 7h3l-1 5 5-7H7l2-5z" fill="#222" stroke="#d7deec"/></svg>
<div class="abs" style="right:29px;top:1021px;font-size:18px;line-height:22px;color:#222;text-align:right">14:55</div>
<div class="abs" style="right:29px;top:1045px;font-size:18px;line-height:22px;color:#222;text-align:right">16-02-2026</div>
</body></html>
